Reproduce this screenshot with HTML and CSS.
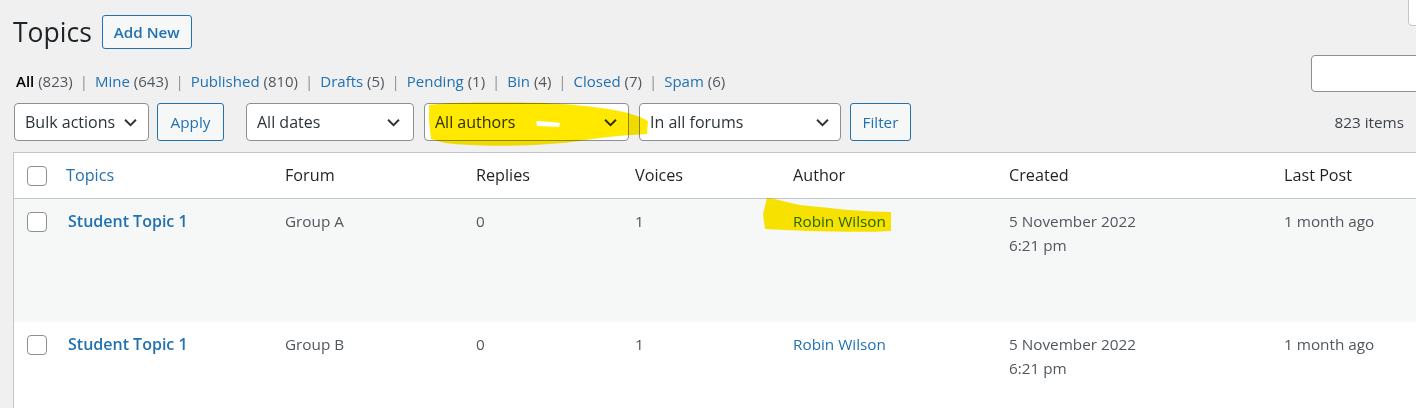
FILE: index.html
```html
<!DOCTYPE html>
<html lang="en">
<head>
<meta charset="utf-8">
<title>Topics</title>
<link rel="stylesheet" href="styles.css">
</head>
<body>
<div class="screen-tab"></div>
<div class="wrap">
  <div class="head">
    <h1 class="title">Topics</h1>
    <a class="btn btn-outline">Add New</a>
  </div>

  <div class="views-row">
    <ul class="views">
      <li><b class="current">All</b> <span class="count">(823)</span><span class="sep">|</span></li>
      <li><a>Mine <span class="count">(643)</span></a><span class="sep">|</span></li>
      <li><a>Published <span class="count">(810)</span></a><span class="sep">|</span></li>
      <li><a>Drafts <span class="count">(5)</span></a><span class="sep">|</span></li>
      <li><a>Pending <span class="count">(1)</span></a><span class="sep">|</span></li>
      <li><a>Bin <span class="count">(4)</span></a><span class="sep">|</span></li>
      <li><a>Closed <span class="count">(7)</span></a><span class="sep">|</span></li>
      <li><a>Spam <span class="count">(6)</span></a></li>
    </ul>
    <div class="search"></div>
  </div>

  <div class="tablenav">
    <div class="select sel-bulk"><span>Bulk actions</span><svg class="chev" viewBox="0 0 12 8"><path d="M1 1.5 6 6.5 11 1.5"/></svg></div>
    <a class="btn btn-plain btn-apply">Apply</a>
    <div class="select sel-dates"><span>All dates</span><svg class="chev" viewBox="0 0 12 8"><path d="M1 1.5 6 6.5 11 1.5"/></svg></div>
    <div class="select sel-authors"><span>All authors</span><svg class="chev" viewBox="0 0 12 8"><path d="M1 1.5 6 6.5 11 1.5"/></svg></div>
    <div class="select sel-forums"><span>In all forums</span><svg class="chev" viewBox="0 0 12 8"><path d="M1 1.5 6 6.5 11 1.5"/></svg></div>
    <a class="btn btn-plain btn-filter">Filter</a>
    <div class="items">823 items</div>
  </div>

  <div class="table">
    <div class="trow thead">
      <div class="cell cb"><span class="check"></span></div>
      <div class="cell"><a class="sort">Topics</a></div>
      <div class="cell">Forum</div>
      <div class="cell">Replies</div>
      <div class="cell">Voices</div>
      <div class="cell">Author</div>
      <div class="cell">Created</div>
      <div class="cell">Last Post</div>
    </div>
    <div class="trow tbody alt tall">
      <div class="cell cb"><span class="check"></span></div>
      <div class="cell"><a class="row-title">Student Topic 1</a></div>
      <div class="cell">Group A</div>
      <div class="cell">0</div>
      <div class="cell">1</div>
      <div class="cell"><a class="author">Robin Wilson</a></div>
      <div class="cell">5 November 2022<br>6:21 pm</div>
      <div class="cell">1 month ago</div>
    </div>
    <div class="trow tbody">
      <div class="cell cb"><span class="check"></span></div>
      <div class="cell"><a class="row-title">Student Topic 1</a></div>
      <div class="cell">Group B</div>
      <div class="cell">0</div>
      <div class="cell">1</div>
      <div class="cell"><a class="author">Robin Wilson</a></div>
      <div class="cell">5 November 2022<br>6:21 pm</div>
      <div class="cell">1 month ago</div>
    </div>
  </div>
</div>

<svg class="marker" width="1416" height="408" viewBox="0 0 1416 408">
  <path fill-rule="evenodd" d="M429,105 C440,102 500,102 545,103 C585,105 612,109 628,113 L640,117 L648,121 L647,134 C625,135 605,137 585,140 C545,147 475,147 445,143 L431,139 L429,120 Z M536,121 C545,121 553,122 560,123 L559,127 C552,127 544,126 537,126 Z"/>
  <path d="M767,198 C776,199 786,202 800,205 C830,208 860,212 891,212 L891,231 C860,233 800,231 765,229 L763,214 Z"/>
</svg>
</body>
</html>
```
FILE: styles.css
```css
html, body {
  margin: 0;
  padding: 0;
}
body {
  width: 1416px;
  height: 408px;
  overflow: hidden;
  background: #f0f0f1;
  font-family: "Open Sans", "Noto Sans", sans-serif;
  color: #3c434a;
  position: relative;
}
a { text-decoration: none; cursor: pointer; }

.screen-tab {
  position: absolute;
  top: -1px;
  left: 1408px;
  width: 20px;
  height: 25px;
  background: #fff;
  border: 1px solid #c3c4c7;
  border-radius: 0 0 4px 4px;
}

.wrap {
  padding-left: 13px;
}

.head {
  display: flex;
  align-items: center;
  gap: 10px;
  padding-top: 15px;
  height: 34px;
}
.title {
  margin: 0;
  font-size: 26.5px;
  font-weight: 400;
  color: #1d2327;
  line-height: 34px;
}

.btn {
  display: inline-flex;
  align-items: center;
  justify-content: center;
  box-sizing: border-box;
  border: 1px solid #2271b1;
  border-radius: 3px;
  background: #f6f7f7;
  color: #2271b1;
  font-size: 15.3px;
}
.btn-outline {
  height: 34px;
  width: 90px;
  font-weight: 600;
  font-size: 15.2px;
}
.btn-plain {
  height: 38px;
}
.btn-apply { width: 67px; margin-left: 8px; }
.btn-filter { width: 61px; margin-left: 9px; }

.views-row {
  margin-top: 6px;
  display: flex;
  align-items: flex-end;
  justify-content: space-between;
  height: 37px;
}
.views {
  list-style: none;
  margin: 0 0 0 3px;
  padding: 0;
  display: flex;
  font-size: 15px;
  line-height: 22px;
}
.views li { white-space: pre; }
.views a { color: #2271b1; }
.current { color: #000; font-weight: 600; }
.count { color: #50575e; font-weight: 400; }
.sep { color: #8c8f94; margin: 0 7px 0 7px; }

.search {
  box-sizing: border-box;
  width: 120px;
  height: 37px;
  margin-right: -15px;
  align-self: flex-start;
  background: #fff;
  border: 1px solid #8c8f94;
  border-radius: 4px;
}

.tablenav {
  margin-top: 11px;
  margin-left: 1px;
  display: flex;
  align-items: center;
  height: 38px;
}
.select {
  box-sizing: border-box;
  height: 38px;
  background: #fff;
  border: 1px solid #8c8f94;
  border-radius: 4px;
  display: flex;
  align-items: center;
  justify-content: space-between;
  padding: 0 11px 0 10px;
  font-size: 16px;
  color: #2c3338;
}
.chev {
  width: 13px;
  height: 9px;
  fill: none;
  stroke: #2c3338;
  stroke-width: 1.8;
}
.sel-bulk { width: 135px; }
.sel-dates { width: 168px; margin-left: 22px; padding-right: 13px; }
.sel-authors { width: 205px; margin-left: 10px; }
.sel-forums { width: 202px; margin-left: 10px; }
.items {
  margin-left: auto;
  margin-right: 12px;
  font-size: 15.3px;
  color: #3c434a;
}

.table {
  margin-top: 11px;
  width: 1460px;
  border: 1px solid #c3c4c7;
  background: #fff;
}
.trow {
  display: grid;
  grid-template-columns: 42px 219px 191px 159px 158px 216px 275px 1fr;
}
.thead {
  height: 45px;
  align-items: center;
  border-bottom: 1px solid #c3c4c7;
  font-size: 16.2px;
  color: #1d2327;
}
.thead .cell { padding: 0 0 2px 10px; }
.thead .cell.cb { padding: 0 0 0 13px; }
.sort { color: #2271b1; }
.tbody {
  height: 123px;
  align-items: start;
  font-size: 15.3px;
  line-height: 24px;
  color: #50575e;
}
.tbody.alt { background: #f6f7f7; }
.tbody .cell { padding: 10px 0 0 10px; }
.cell.cb { padding-left: 13px; display: flex; }
.tbody .cell.cb { padding-top: 13px; }
.check {
  box-sizing: border-box;
  width: 20px;
  height: 20px;
  background: #fff;
  border: 1px solid #8c8f94;
  border-radius: 4px;
}
.row-title {
  color: #2271b1;
  font-weight: 600;
  font-size: 16px;
  margin-left: 2px;
}
.author { color: #2271b1; }

.marker {
  position: absolute;
  left: 0;
  top: 0;
  fill: #ffe900;
  mix-blend-mode: multiply;
  pointer-events: none;
}
```
